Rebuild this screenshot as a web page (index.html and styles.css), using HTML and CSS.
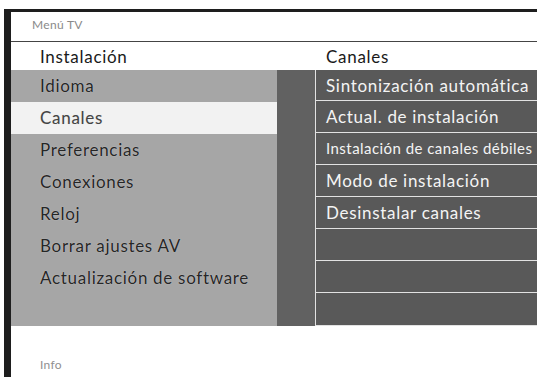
FILE: index.html
```html
<!DOCTYPE html>
<html lang="es">
<head>
    <meta charset="UTF-8">
    <title>Menú TV</title>
    <link rel="stylesheet" href="styles.css">
</head>
<body>
    <div class="frame">
        <div class="title">Menú TV</div>
        <div class="heads">
            <div class="head-left">Instalación</div>
            <div class="head-right">Canales</div>
        </div>
        <div class="panels">
            <ul class="menu">
                <li>Idioma</li>
                <li class="selected">Canales</li>
                <li>Preferencias</li>
                <li>Conexiones</li>
                <li>Reloj</li>
                <li>Borrar ajustes AV</li>
                <li>Actualización de software</li>
                <li></li>
            </ul>
            <div class="strip"></div>
            <ul class="submenu">
                <li>Sintonización automática</li>
                <li>Actual. de instalación</li>
                <li class="small">Instalación de canales débiles</li>
                <li>Modo de instalación</li>
                <li>Desinstalar canales</li>
                <li></li>
                <li></li>
                <li></li>
            </ul>
        </div>
        <div class="info">Info</div>
    </div>
</body>
</html>
```

FILE: styles.css
```css
body {
    margin: 0;
    background: #ffffff;
    font-family: Lato, "Open Sans", sans-serif;
    width: 537px;
    height: 377px;
    overflow: hidden;
}

.frame {
    margin: 9px 0 0 4px;
    height: 365px;
    border-left: 7px solid #1e1e1e;
    border-top: 3px solid #1e1e1e;
    display: flex;
    flex-direction: column;
}

.title {
    height: 30px;
    padding: 5px 0 0 21px;
    box-sizing: border-box;
    font-size: 12px;
    letter-spacing: 0.3px;
    color: #8a8a8a;
    border-bottom: 1px solid #444;
}

.heads {
    display: flex;
    height: 28px;
    align-items: center;
    font-size: 17px;
    letter-spacing: 0.7px;
    color: #1a1a1a;
}

.head-left {
    width: 266px;
    padding-left: 29px;
    box-sizing: border-box;
}

.head-right {
    padding-left: 49px;
}

.panels {
    display: flex;
    height: 256px;
}

.menu,
.submenu {
    list-style: none;
    margin: 0;
    padding: 0;
}

.menu {
    width: 266px;
    background: #a6a6a6;
}

.menu li {
    height: 32px;
    line-height: 32px;
    padding-left: 29px;
    font-size: 17px;
    letter-spacing: 0.7px;
    color: #262626;
    text-shadow: 0 0 1px #d8d8d8;
    white-space: nowrap;
}

.menu li.selected {
    background: #f2f2f2;
    color: #444;
}

.strip {
    width: 38px;
    background: #616161;
}

.submenu {
    flex: 1;
    min-width: 0;
    background: #595959;
    border-left: 1px solid #e2e2e2;
    border-bottom: 1px solid #e2e2e2;
}

.submenu li {
    height: 32px;
    box-sizing: border-box;
    line-height: 31px;
    padding-left: 10px;
    font-size: 17px;
    letter-spacing: 0.7px;
    color: #f4f4f4;
    white-space: nowrap;
    overflow: hidden;
    border-bottom: 1px solid #e2e2e2;
}

.submenu li:first-child {
    height: 31px;
}

.submenu li:last-child {
    border-bottom: none;
}

.submenu li.small {
    font-size: 15px;
    letter-spacing: 0.45px;
}

.info {
    padding: 31px 0 0 29px;
    font-size: 12px;
    letter-spacing: 0.3px;
    color: #909090;
}
```
